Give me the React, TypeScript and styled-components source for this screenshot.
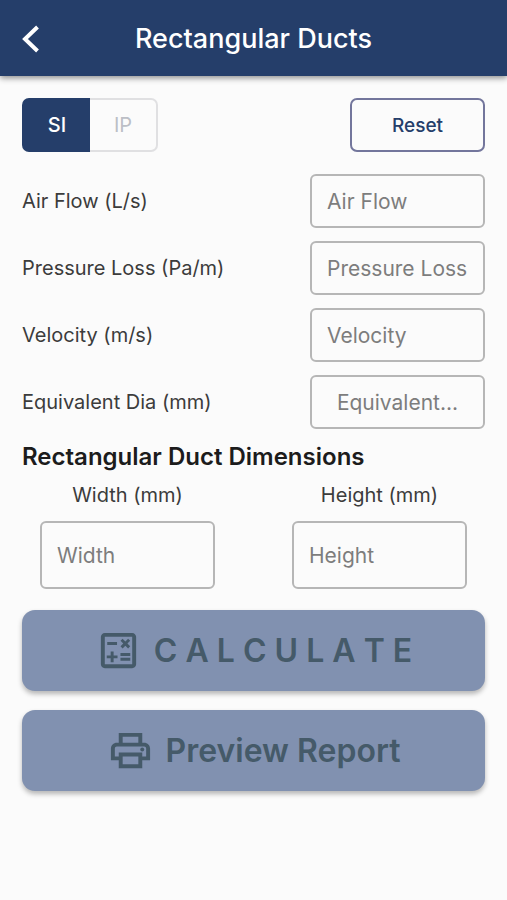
import React, { useState } from "react";
import styled, { createGlobalStyle } from "styled-components";
import { MdOutlineCalculate, MdOutlinePrint } from "react-icons/md";

const navy = "#253e6a";

const GlobalStyle = createGlobalStyle`
  *, *::before, *::after { box-sizing: border-box; }
  body {
    margin: 0;
    background: #fbfbfb;
    color: #3c3c3c;
    font-family: Inter, "Liberation Sans", sans-serif;
  }
  button, input { font-family: inherit; }
`;

const Header = styled.header`
  display: grid;
  grid-template-columns: 64px 1fr 64px;
  align-items: center;
  height: 76px;
  padding-top: 2px;
  background: ${navy};
  color: #fff;
  box-shadow: 0 2px 6px rgba(0, 0, 0, 0.45);
`;

const BackButton = styled.button`
  display: flex;
  padding: 12px 20px;
  border: 0;
  background: none;
  color: inherit;
  cursor: pointer;
`;

const Title = styled.h1`
  margin: 0;
  font-size: 27px;
  line-height: 32px;
  font-weight: 500;
  text-align: center;
  white-space: nowrap;
`;

const Content = styled.main`
  display: flex;
  flex-direction: column;
  padding: 22px;
`;

const Toolbar = styled.div`
  display: flex;
  justify-content: space-between;
  margin-bottom: 22px;
`;

const UnitToggle = styled.div`
  display: flex;
  height: 54px;
`;

const UnitButton = styled.button<{ $active: boolean }>`
  width: 68px;
  padding: 0;
  border: 2px solid ${(p) => (p.$active ? navy : "#e0e0e2")};
  background: ${(p) => (p.$active ? navy : "transparent")};
  color: ${(p) => (p.$active ? "#fff" : "#bcbfc6")};
  font-size: 20px;
  font-weight: ${(p) => (p.$active ? 500 : 400)};
  cursor: pointer;

  &:first-child {
    border-right-width: 0;
    border-radius: 7px 0 0 7px;
  }
  &:last-child {
    border-left-width: 0;
    border-radius: 0 7px 7px 0;
  }
`;

const ResetButton = styled.button`
  width: 135px;
  height: 54px;
  border: 2px solid #73769c;
  border-radius: 7px;
  background: transparent;
  color: ${navy};
  font-size: 19px;
  font-weight: 500;
  cursor: pointer;
`;

const Fields = styled.div`
  display: flex;
  flex-direction: column;
  gap: 13px;
`;

const FieldRow = styled.div`
  display: flex;
  align-items: center;
  justify-content: space-between;
`;

const Label = styled.label`
  font-size: 20px;
  line-height: 24px;
`;

const Input = styled.input<{ $tall?: boolean; $centered?: boolean }>`
  width: 175px;
  height: ${(p) => (p.$tall ? 68 : 54)}px;
  padding: 0 ${(p) => (p.$centered ? 8 : 15)}px;
  border: 2px solid #b6b6b6;
  border-radius: 6px;
  background: transparent;
  color: #3c3c3c;
  font-size: 21px;
  text-align: ${(p) => (p.$centered ? "center" : "left")};

  &::placeholder {
    color: #7d7d7d;
    opacity: 1;
  }
`;

const SectionTitle = styled.h2`
  margin: 13px 0 11px;
  color: #1c1c1c;
  font-size: 24px;
  line-height: 30px;
  font-weight: 600;
`;

const Dimensions = styled.div`
  display: flex;
  justify-content: space-between;
  padding: 0 18px;
`;

const Dimension = styled.div`
  display: flex;
  flex-direction: column;
  align-items: center;
  gap: 14px;
`;

const Actions = styled.div`
  display: flex;
  flex-direction: column;
  gap: 19px;
  margin-top: 21px;
`;

const ActionButton = styled.button`
  display: flex;
  align-items: center;
  justify-content: center;
  gap: 12px;
  height: 81px;
  padding: 0;
  border: 0;
  border-radius: 13px;
  background: #8191b0;
  color: #455a69;
  box-shadow: 0 3px 5px rgba(0, 0, 0, 0.28);
  font-size: 32px;
  font-weight: 600;
  white-space: nowrap;
`;

const rows = [
  { id: "flow", label: "Air Flow (L/s)", hint: "Air Flow" },
  { id: "loss", label: "Pressure Loss (Pa/m)", hint: "Pressure Loss" },
  { id: "velocity", label: "Velocity (m/s)", hint: "Velocity" },
  { id: "diameter", label: "Equivalent Dia (mm)", hint: "Equivalent...", centered: true },
];

const dimensions = [
  { id: "width", label: "Width (mm)", hint: "Width" },
  { id: "height", label: "Height (mm)", hint: "Height" },
];

export default function App() {
  const [unit, setUnit] = useState("SI");
  return (
    <>
      <GlobalStyle />
      <Header>
        <BackButton type="button" aria-label="Back">
          <svg width="20" height="28" viewBox="0 0 20 28" fill="none" stroke="currentColor" strokeWidth="4">
            <path d="M17.5 2 5 14 17.5 26" />
          </svg>
        </BackButton>
        <Title>Rectangular Ducts</Title>
      </Header>
      <Content>
        <Toolbar>
          <UnitToggle>
            {["SI", "IP"].map((name) => (
              <UnitButton
                key={name}
                type="button"
                $active={unit === name}
                aria-pressed={unit === name}
                onClick={() => setUnit(name)}
              >
                {name}
              </UnitButton>
            ))}
          </UnitToggle>
          <ResetButton type="button">Reset</ResetButton>
        </Toolbar>
        <Fields>
          {rows.map((row) => (
            <FieldRow key={row.id}>
              <Label htmlFor={row.id}>{row.label}</Label>
              <Input id={row.id} placeholder={row.hint} $centered={row.centered} />
            </FieldRow>
          ))}
        </Fields>
        <SectionTitle>Rectangular Duct Dimensions</SectionTitle>
        <Dimensions>
          {dimensions.map((item) => (
            <Dimension key={item.id}>
              <Label htmlFor={item.id}>{item.label}</Label>
              <Input id={item.id} placeholder={item.hint} $tall />
            </Dimension>
          ))}
        </Dimensions>
        <Actions>
          <ActionButton type="button" disabled>
            <MdOutlineCalculate size={47} />
            C A L C U L A T E
          </ActionButton>
          <ActionButton type="button" disabled>
            <MdOutlinePrint size={47} />
            Preview Report
          </ActionButton>
        </Actions>
      </Content>
    </>
  );
}
